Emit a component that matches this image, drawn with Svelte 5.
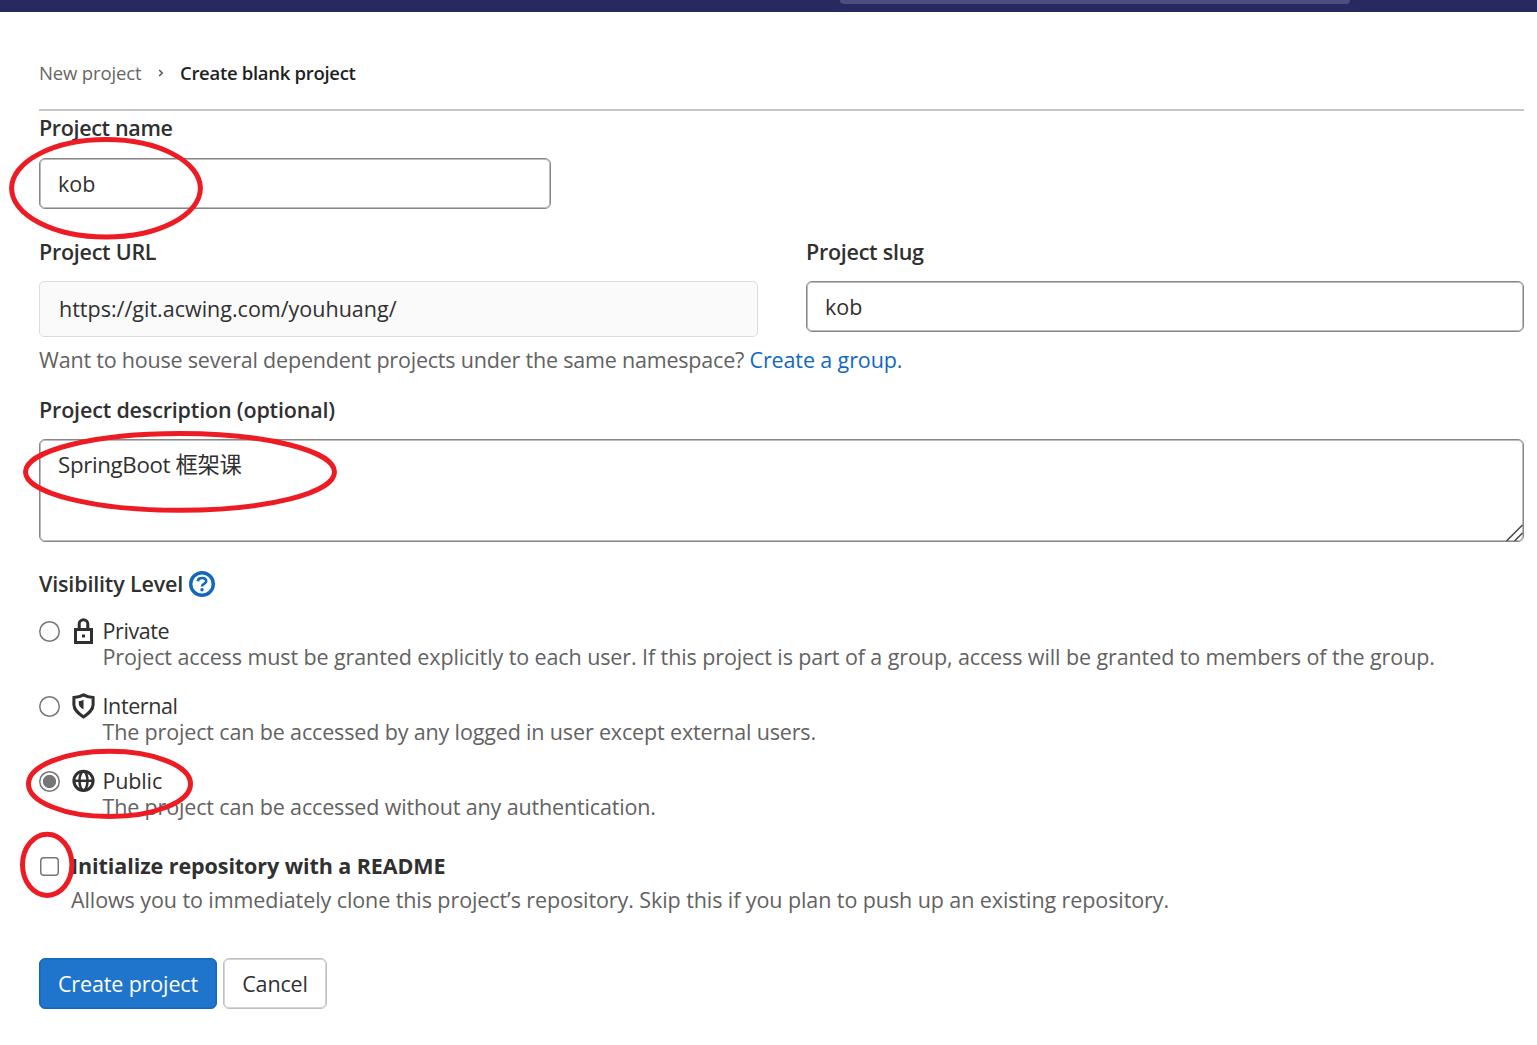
<script>
  const levels = [
    { id: 'private', name: 'Private', text: 'Project access must be granted explicitly to each user. If this project is part of a group, access will be granted to members of the group.' },
    { id: 'internal', name: 'Internal', text: 'The project can be accessed by any logged in user except external users.' },
    { id: 'public', name: 'Public', text: 'The project can be accessed without any authentication.' }
  ];
  let selected = $state('public');
</script>

<header class="topbar"><div class="search"></div></header>

<main>
  <nav class="crumbs">
    <a href="#new">New project</a>
    <svg class="chevron" width="6" height="8" viewBox="0 0 6 8"><path d="M1.2 1 4.2 4 1.2 7" /></svg>
    <strong>Create blank project</strong>
  </nav>

  <form>
    <label class="title name-label" for="name">Project name</label>
    <input id="name" class="control name" value="kob" />

    <div class="pair">
      <div>
        <div class="title url-label">Project URL</div>
        <div class="url">https://git.acwing.com/youhuang/</div>
      </div>
      <div>
        <label class="title url-label" for="slug">Project slug</label>
        <input id="slug" class="control" value="kob" />
      </div>
    </div>
    <p class="hint">Want to house several dependent projects under the same namespace? <a href="#group">Create a group.</a></p>

    <label class="title" for="desc">Project description (optional)</label>
    <div class="area">
      <textarea id="desc" class="control">SpringBoot 框架课</textarea>
      <svg class="grip" width="18" height="18" viewBox="0 0 18 18"><path d="M1.500 18 17.500 2M9.500 18 17.500 10" /></svg>
    </div>

    <div class="title visibility">
      <span>Visibility Level</span>
      <svg width="26" height="26" viewBox="0 0 26 26" class="help">
        <circle cx="13" cy="13" r="11.3" />
        <path d="M8.7 10.300C9 8.200 10.700 7 13 7c2.500 0 4.200 1.300 4.200 3.200 0 2.900-4.200 2.500-4.200 5.300" />
        <circle class="dot" cx="13" cy="18.800" r="1.700" />
      </svg>
    </div>

    {#each levels as level}
      <div class="level {level.id}">
        <button type="button" class="radio" class:on={selected === level.id} aria-label={level.name} onclick={() => (selected = level.id)}></button>
        <svg class="icon" width="26" height="26" viewBox="0 0 26 26">
          {#if level.id === 'private'}
            <path class="line" d="M4.500 11.500h16v13h-16zM8.200 11V6a4.300 4.300 0 0 1 8.600 0v5" />
            <path class="fill" d="M11 16.500h3v3h-3z" />
          {:else if level.id === 'internal'}
            <path class="line" d="M12.500 1.900c3 1.700 6 2.500 9.600 2.700v7.200c0 5-4 8.200-9.600 12.200-5.600-4-9.600-7.200-9.600-12.200V4.600c3.600-.2 6.600-1 9.600-2.700z" />
            <path class="fill" d="M12.500 6.800v9.800c-2.800-2-4.700-3.600-4.700-5.600V8.300c1.800-.2 3.300-.7 4.700-1.500z" />
          {:else}
            <circle class="line" cx="12.500" cy="12.800" r="9.600" />
            <ellipse class="grid" cx="12.500" cy="12.800" rx="4" ry="9.300" />
            <path class="grid" d="M3 12.800h19" />
          {/if}
        </svg>
        <div class="copy">
          <div class="level-name">{level.name}</div>
          <p>{level.text}</p>
        </div>
      </div>
    {/each}

    <div class="readme">
      <button type="button" class="check" aria-label="Initialize repository"></button>
      <div>
        <strong>Initialize repository with a README</strong>
        <p>Allows you to immediately clone this project’s repository. Skip this if you plan to push up an existing repository.</p>
      </div>
    </div>

    <div class="actions">
      <button type="button" class="btn primary">Create project</button>
      <button type="button" class="btn cancel">Cancel</button>
    </div>
  </form>
</main>

<svg class="marks" width="400" height="1045" viewBox="0 0 400 1045">
  <ellipse cx="106" cy="188.300" rx="94.400" ry="48.700" />
  <ellipse cx="180" cy="471.900" rx="154.500" ry="38.400" />
  <ellipse cx="109.500" cy="783.900" rx="81" ry="32.600" />
  <ellipse cx="47.200" cy="864.800" rx="24.700" ry="30.600" />
</svg>

<style>
  :global(body) { background: #fff; overflow: hidden; }
  :global(#app) { position: relative; }
  * { box-sizing: border-box; }
  p { margin: 0; }
  a { text-decoration: none; }
  .topbar { height: 12px; background: #292961; padding-left: 840px; }
  .search { width: 510px; height: 4px; background: #4d4d7e; border-radius: 0 0 6px 6px; }
  main {
    padding: 25px 13px 0 39px;
    font: 21.5px/26px "Open Sans", "Noto Sans", "Noto Sans CJK SC", sans-serif;
    color: #303030;
  }
  .crumbs { height: 74px; display: flex; align-items: center; font-size: 18.5px; border-bottom: 2px solid #c6c6c6; }
  .crumbs a { color: #666; width: 102px; white-space: nowrap; letter-spacing: -0.15px; }
  .crumbs strong { font-weight: 600; color: #1f1f1f; white-space: nowrap; letter-spacing: -0.3px; }
  .chevron { margin: 0 16px 0 17px; fill: none; stroke: #555; stroke-width: 1.5; }
  form { padding-top: 4px; }
  .title { display: block; height: 26px; font-weight: 600; white-space: nowrap; letter-spacing: -0.17px; }
  .name-label { letter-spacing: -0.35px; }
  .url-label { letter-spacing: -0.26px; }
  .control {
    display: block; width: 100%; height: 51px; margin: 0; padding: 0 18px;
    border: 1px solid #868686; border-radius: 6px; background: #fff;
    box-shadow: inset 0 0 0 1px #bcbcbc;
    font: inherit; color: #303030; outline: none;
  }
  .name { width: 512px; margin-top: 17px; }
  .pair { display: grid; grid-template-columns: 719px 718px; gap: 48px; margin-top: 30px; }
  .pair .title { margin-bottom: 16px; }
  .url { height: 56px; padding: 14px 19px; border: 1px solid #dcdcdc; border-radius: 5px; background: #fafafa; }
  .hint { margin: 10px 0 24px; color: #626262; white-space: nowrap; letter-spacing: -0.2px; }
  .hint a { color: #1068bf; letter-spacing: -0.12px; }
  .area { position: relative; margin-top: 16px; }
  textarea.control { height: 103px; padding: 12px 18px; resize: none; font-size: 22.3px; letter-spacing: -0.34px; }
  .grip { position: absolute; right: 1px; bottom: 1px; fill: none; stroke: #444; stroke-width: 1.5; }
  .visibility { display: flex; gap: 6px; margin: 29px 0 21px; }
  .visibility span { width: 144px; }
  .help { fill: none; stroke: #1068bf; stroke-width: 3.4; }
  .help path { stroke-width: 2.7; }
  .help .dot { fill: #1068bf; stroke: none; }
  .level { display: flex; height: 75px; }
  .radio { width: 21px; height: 21px; margin: 3px 11px 0 0; padding: 0; border: none; border-radius: 50%; background: #fff; box-shadow: inset 0 0 0 1.5px #767676; }
  .radio.on { background: radial-gradient(circle, #767676 6.2px, #fff 7px); }
  .icon { margin-right: 5.5px; }
  .line { fill: none; stroke: #303030; stroke-width: 3; }
  .fill { fill: #303030; }
  .grid { fill: none; stroke: #303030; stroke-width: 2.5; }
  .level-name { letter-spacing: -0.4px; }
  .public .level-name { letter-spacing: -0.15px; }
  .copy p, .readme p { color: #626262; white-space: nowrap; letter-spacing: -0.1px; }
  .internal .copy p, .public .copy p { letter-spacing: -0.15px; }
  .readme { display: flex; margin-top: 10px; }
  .readme strong { display: block; font-weight: 700; white-space: nowrap; letter-spacing: -0.08px; }
  .readme p { margin-top: 8px; letter-spacing: -0.085px; }
  .check { width: 19px; height: 19px; margin: 4px 12px 0 1px; padding: 0; border: none; border-radius: 4px; background: #fff; box-shadow: inset 0 0 0 1.5px #767676; }
  .actions { display: flex; gap: 6px; margin-top: 45px; }
  .btn { height: 51px; padding: 0; font: inherit; letter-spacing: -0.14px; border-radius: 6px; border: 1px solid #bfbfbf; box-shadow: inset 0 0 0 1px #d4d4d4; background: #fff; color: #303030; white-space: nowrap; }
  .primary { width: 178px; color: #fff; background: #1f75cb; border-color: #1068bf; box-shadow: inset 0 0 0 1px #166dc4; }
  .cancel { width: 104px; }
  .marks { position: absolute; left: 0; top: 0; pointer-events: none; fill: none; stroke: #ed1c24; stroke-width: 5; }
</style>
